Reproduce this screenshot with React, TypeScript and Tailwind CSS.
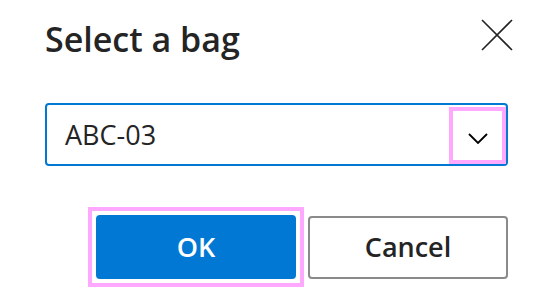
const font = { fontFamily: '"Open Sans", "Noto Sans", sans-serif' };

const BagDialog = () => {
  return (
    <div
      className="w-[554px] h-[300px] bg-white text-[#242424] pl-[45px] pr-[46px] pt-[17px] overflow-hidden"
      style={font}
    >
      {/* header */}
      <div className="flex items-start justify-between">
        <h2 className="text-[34px] leading-[44px] font-semibold">Select a bag</h2>
        <button className="w-8 h-8 mt-[2px] -mr-[5px] flex items-center justify-center">
          <svg width="32" height="32" viewBox="0 0 32 32">
            <path d="M1 1L31 31M31 1L1 31" stroke="#242424" strokeWidth="1.6" fill="none" />
          </svg>
        </button>
      </div>

      {/* select */}
      <div className="mt-[42px] h-[63px] flex items-end border-2 border-[#0078d4] rounded-[4px]">
        <span className="flex-1 self-center pl-[18px] text-[27px] leading-none">ABC-03</span>
        <div className="w-[57px] h-[57px] border-4 border-[#ffa8ff] flex items-center justify-center">
          <svg width="20" height="11" viewBox="0 0 20 11" className="mt-[5px]">
            <path d="M1 1L10 10L19 1" stroke="#000" strokeWidth="1.8" fill="none" />
          </svg>
        </div>
      </div>

      {/* buttons */}
      <div className="mt-[41px] flex items-center justify-end gap-1">
        <div className="border-4 border-[#ffa8ff] p-1">
          <button className="block w-[200px] h-[64px] rounded-[4px] bg-[#0078d4] text-white text-[27px] font-semibold">
            OK
          </button>
        </div>
        <button className="w-[200px] h-[63px] rounded-[4px] border-2 border-[#8a8a8a] bg-white text-[27px] font-semibold text-[#242424]">
          Cancel
        </button>
      </div>
    </div>
  );
};

export default function App() {
  return <BagDialog />;
}
